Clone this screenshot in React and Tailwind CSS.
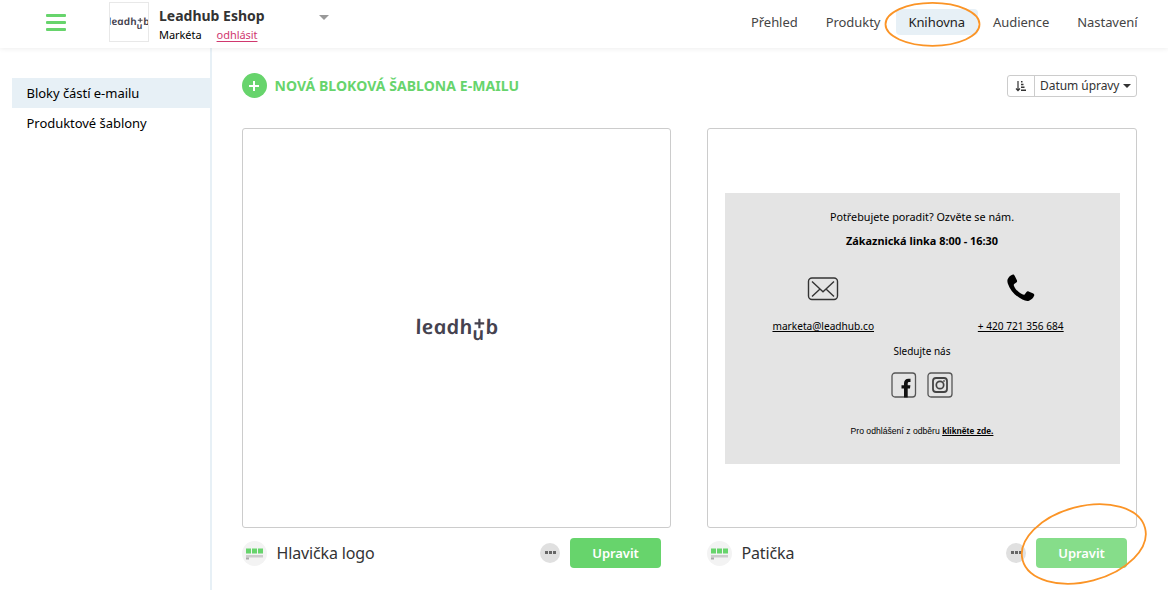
import React, { useState } from 'react';

const navItems = ['Přehled', 'Produkty', 'Knihovna', 'Audience', 'Nastavení'];
const sideItems = ['Bloky částí e-mailu', 'Produktové šablony'];

// upright italic gives the single-storey "a" of the wordmark
function Logo({ className = '' }) {
  return (
    <svg viewBox="0 0 84 26" className={`shrink-0 overflow-visible font-['Noto_Sans',sans-serif] font-semibold italic ${className}`} fill="#45424f">
      <g transform="translate(1.6 18.7) skewX(12)">
        <text fontSize="20" textLength="57" lengthAdjust="spacingAndGlyphs">leadh</text>
      </g>
      <path d="M64.4 3.8v9.4M59.6 8.4h9.6" stroke="#45424f" strokeWidth="2.2" fill="none" />
      <g transform="translate(58.2 25) skewX(12)">
        <text fontSize="18" textLength="12" lengthAdjust="spacingAndGlyphs">u</text>
      </g>
      <g transform="translate(71.6 18.7) skewX(12)">
        <text fontSize="20" textLength="13" lengthAdjust="spacingAndGlyphs">b</text>
      </g>
    </svg>
  );
}

function Caret({ className = '' }) {
  return (
    <svg viewBox="0 0 10 5" className={className} fill="currentColor">
      <path d="M0 0h10L5 5z" />
    </svg>
  );
}

function Header({ active, onSelect }) {
  return (
    <header className="relative z-10 flex h-12 justify-between bg-white pr-[18px] pl-[46px] shadow-[0_1px_5px_rgba(0,0,0,0.07)]">
      <div className="flex">
        <button className="mt-[14px] flex h-[17px] w-5 flex-col justify-between">
          <span className="h-[3px] w-full rounded-[1px] bg-[#67d46c]" />
          <span className="h-[3px] w-full rounded-[1px] bg-[#67d46c]" />
          <span className="h-[3px] w-full rounded-[1px] bg-[#67d46c]" />
        </button>
        <div className="mt-[2px] ml-[43px] flex h-10 w-10 items-center justify-center overflow-hidden border border-[#e8e8e8]">
          <Logo className="h-[13px] w-[42px]" />
        </div>
        <div className="ml-[10px] w-[160px] pt-[6px]">
          <div className="text-[14px] leading-5 font-bold text-[#333]">Leadhub Eshop</div>
          <div className="flex gap-[15px] text-[11px] leading-[18px] tracking-[-0.05px] text-black">
            <span>Markéta</span>
            <a href="#" className="text-[#d0386f] underline underline-offset-2">odhlásit</a>
          </div>
        </div>
        <Caret className="mt-[15px] h-[5px] w-[10px] text-[#999]" />
      </div>
      <nav className="mt-[9px] flex h-[26px] gap-[3px] text-[13px] leading-[26px] tracking-[-0.05px] text-[#444]">
        {navItems.map((item) => (
          <button
            key={item}
            onClick={() => onSelect(item)}
            className={`rounded px-[12.5px] ${item === active ? 'bg-[#e7f0f6] text-[#222]' : ''}`}
          >
            {item}
          </button>
        ))}
      </nav>
    </header>
  );
}

function Sidebar() {
  return (
    <aside className="w-[212px] shrink-0 border-r-2 border-[#e7f0f6] pt-[30px] pl-3 text-[13px] leading-[30px] tracking-[-0.04px] text-black">
      {sideItems.map((item, idx) => (
        <div key={item} className={`h-[30px] pl-[14.5px] ${idx === 0 ? 'bg-[#e7f0f6]' : ''}`}>
          {item}
        </div>
      ))}
    </aside>
  );
}

function SortButton() {
  return (
    <div className="flex h-[22px] rounded-[3px] border border-[#ccc] text-[12px] leading-5 text-[#333]">
      <span className="flex w-[27px] items-center justify-center border-r border-[#ccc]">
        <svg viewBox="0 0 12 12" className="h-3 w-3" fill="none" stroke="#333">
          <path d="M3 1v9.5M1 8.5l2 2.2 2-2.2" strokeWidth="1.2" />
          <path d="M6 1.7h1.5M6 4.5h2.5M6 7.3h3.5M6 10.2h5" strokeWidth="1.5" />
        </svg>
      </span>
      <span className="flex w-[101px] items-center justify-between px-[5px] tracking-[-0.05px]">
        Datum úpravy
        <Caret className="h-1 w-2" />
      </span>
    </div>
  );
}

function FooterPreview() {
  return (
    <div className="flex h-[271px] w-[395px] flex-col items-center bg-[#e4e4e4] pt-[14px] text-[10.8px] leading-5 text-black">
      <p>Potřebujete poradit? Ozvěte se nám.</p>
      <p className="mt-1 text-[10.9px] font-bold">Zákaznická linka 8:00 - 16:30</p>
      <div className="mt-[22px] flex w-full text-[10.15px]">
        <div className="flex w-1/2 flex-col items-center">
          <svg viewBox="0 0 32 28" className="h-7 w-8" fill="none" stroke="#333" strokeWidth="1.4">
            <rect x="1.5" y="5" width="29" height="21.5" rx="3.5" />
            <path d="M5 8.5l8 7.5 3 2.8 3-2.8 8-7.5M5 23.5l8-7.5M27 23.5l-8-7.5" />
          </svg>
          <a href="#" className="mt-[15px] underline">marketa@leadhub.co</a>
        </div>
        <div className="flex w-1/2 flex-col items-center">
          <svg viewBox="0 0 28 28" className="mt-px h-7 w-7" fill="#000">
            <path d="M1.2 4.2C2.4 2.4 4.3.9 6 .6c.8-.1 1.4.6 1.8 1.5l2.1 4.2c.4 1 .2 1.6-.6 2.2L7.2 10c-.6.5-.5 1.1-.2 1.9 1.5 3.8 4.9 7 8.9 8.7.8.3 1.4.2 1.9-.4l1.7-2.2c.6-.7 1.2-.9 2.1-.5l4.7 2.1c.9.5 1.2 1.2.9 2-.8 2.3-2.9 4.4-5.2 5.2-1.9.6-4.2 0-6.6-1.2C8.9 22.4 2.9 16.2.8 9.4.2 7.3.1 5.8 1.2 4.2z" />
          </svg>
          <a href="#" className="mt-[14px] underline">+ 420 721 356 684</a>
        </div>
      </div>
      <p className="mt-[5px] text-[10px]">Sledujte nás</p>
      <div className="mt-[11px] flex gap-[10px]">
        <svg viewBox="0 0 26 26" className="h-[26px] w-[26px]">
          <rect x="1" y="1" width="23.5" height="24" rx="3" fill="none" stroke="#555" strokeWidth="1.3" />
          <path d="M13 25.5v-9h-2.5v-3.2H13v-1.8c0-3.2 1.6-4.8 4.6-4.8h1.9v3.2h-1.3c-1.1 0-1.5.5-1.5 1.6v1.8h2.7l-.4 3.2h-2.3v9z" fill="#111" />
        </svg>
        <svg viewBox="0 0 26 26" className="h-[26px] w-[26px]" fill="none" stroke="#555">
          <rect x="1" y="1" width="24" height="24" rx="3" strokeWidth="1.3" />
          <rect x="6" y="6" width="14" height="14" rx="3" strokeWidth="1.8" stroke="#444" />
          <circle cx="13" cy="13" r="3.7" strokeWidth="1.7" stroke="#444" />
          <circle cx="17" cy="9" r=".5" stroke="#444" />
        </svg>
      </div>
      <p className="mt-[23px] font-['Liberation_Sans',sans-serif] text-[8.65px]">
        Pro odhlášení z odběru <b className="underline">klikněte zde.</b>
      </p>
    </div>
  );
}

function TemplateCard({ title, faded, children }) {
  return (
    <div>
      <div className="flex h-[400px] items-center justify-center rounded-[3px] border border-[#ccc]">
        {children}
      </div>
      <div className="mt-[10px] flex h-[30px] items-center pr-[10px]">
        <span className="flex h-[25px] w-[25px] items-center justify-center rounded-full bg-[#f3f3f3] pt-[2px]">
          <svg viewBox="0 0 17 12" className="h-3 w-[17px]">
            <path d="M0 .5h5v5H0zM6 .5h5v5H6zM12 .5h5v5h-5z" fill="#67d46c" />
            <path d="M0 7h17v2.5H0z" fill="#ccc" />
            <path d="M0 9.5h3v2H0z" fill="#aaa" />
          </svg>
        </span>
        <h3 className="ml-[9.5px] flex-1 text-[16px] leading-6 tracking-[-0.15px] text-[#333]">{title}</h3>
        <button className="mr-[10px] flex h-5 w-5 items-center justify-center gap-[1px] rounded-full bg-[#e0e0e0] pb-px">
          <span className="h-[3px] w-[3px] bg-[#666]" />
          <span className="h-[3px] w-[3px] bg-[#666]" />
          <span className="h-[3px] w-[3px] bg-[#666]" />
        </button>
        <button className={`h-[30px] w-[91px] rounded pt-px text-[13px] font-semibold tracking-[-0.05px] text-white ${faded ? 'bg-[#86dd8a]' : 'bg-[#67d46c]'}`}>
          Upravit
        </button>
      </div>
    </div>
  );
}

export default function App() {
  const [active, setActive] = useState('Knihovna');

  return (
    <div className="relative flex h-[590px] w-[1168px] flex-col overflow-hidden bg-white font-['Noto_Sans',sans-serif]">
      <Header active={active} onSelect={setActive} />
      <div className="flex flex-1">
        <Sidebar />
        <main className="flex-1 pt-[25px] pr-[31px] pl-[30px]">
          <div className="flex h-[25px] items-center justify-between">
            <button className="flex items-center gap-[7.5px] text-[14px] font-bold tracking-[0.06px] text-[#67d46c]">
              <svg viewBox="0 0 25 25" className="h-[25px] w-[25px]">
                <circle cx="12.5" cy="12.5" r="12.5" fill="#67d46c" />
                <path d="M12 8v10M7 13h10" stroke="#fff" strokeWidth="2" />
              </svg>
              NOVÁ BLOKOVÁ ŠABLONA E-MAILU
            </button>
            <SortButton />
          </div>
          <div className="mt-[30px] grid grid-cols-[429px_430px] gap-9">
            <TemplateCard title="Hlavička logo">
              <Logo className="h-[26px] w-[84px]" />
            </TemplateCard>
            <TemplateCard title="Patička" faded>
              <FooterPreview />
            </TemplateCard>
          </div>
        </main>
      </div>

      {/* orange highlights over the nav item and the edit button */}
      <svg viewBox="0 0 1168 590" className="pointer-events-none absolute inset-0 z-20 h-full w-full" fill="none" stroke="#fb9426" strokeWidth="1.8">
        <ellipse cx="932.5" cy="24.3" rx="47" ry="21.5" />
        <ellipse cx="1083.8" cy="544" rx="63.3" ry="37.6" transform="rotate(-14.7 1083.8 544)" />
      </svg>
    </div>
  );
}
